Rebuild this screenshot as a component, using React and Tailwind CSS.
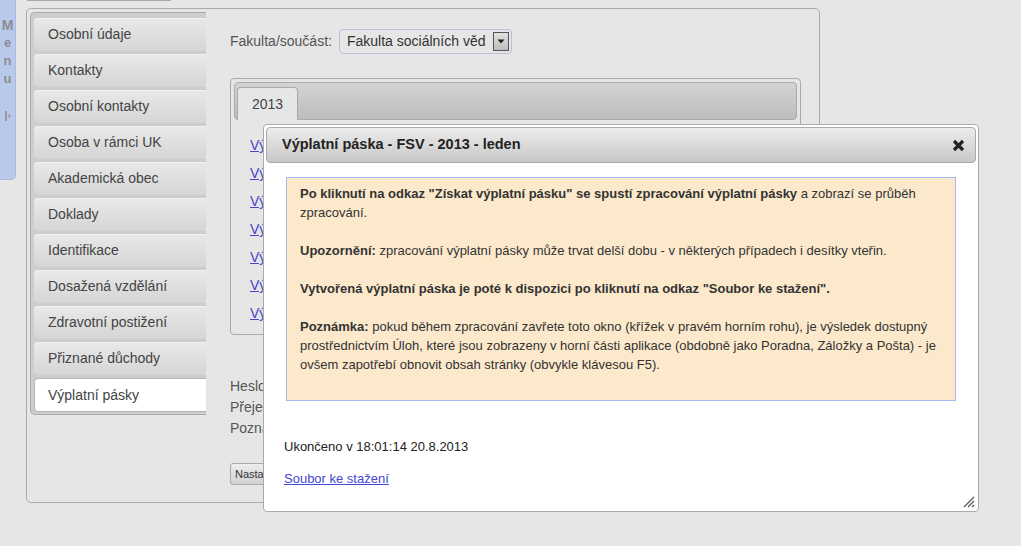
import React from "react";

const sideTabs = [
  "Osobní údaje",
  "Kontakty",
  "Osobní kontakty",
  "Osoba v rámci UK",
  "Akademická obec",
  "Doklady",
  "Identifikace",
  "Dosažená vzdělání",
  "Zdravotní postižení",
  "Přiznané důchody",
  "Výplatní pásky",
];

const months = ["leden", "únor", "březen", "duben", "květen", "červen", "červenec"];

function MenuStrip() {
  return (
    <div className="flex h-[180px] w-[16px] flex-col items-center rounded-br-[5px] border-r border-b border-[#a9bbe0] bg-[#b9c9ec] pt-[16px] text-[13px] font-bold leading-[18px] text-[#8c8c8c]">
      <span className="text-[14px]">M</span>
      <span>e</span>
      <span>n</span>
      <span>u</span>
      <svg className="mt-[22px]" width="8" height="12" viewBox="0 0 8 12">
        <rect x="1" y="1" width="2" height="10" fill="#9a9a9a" />
        <path d="M4.5 3.5 L7 6 L4.5 8.5 Z" fill="#9a9a9a" />
      </svg>
    </div>
  );
}

function SideTabs() {
  return (
    <div className="flex h-[403px] w-[176px] shrink-0 flex-col gap-[3px] rounded-l-[5px] border-y border-l border-[#aaa] bg-[#cdcdcd] pl-[3px] pt-[5px]">
      {sideTabs.map((label, i) => {
        const active = i === sideTabs.length - 1;
        return (
          <div
            key={label}
            className={
              active
                ? "flex h-[34px] items-center rounded-l-[4px] border-y border-l border-[#b4b4b4] bg-white pl-[13px] text-[14px] text-[#444]"
                : "flex h-[33px] items-center rounded-l-[4px] bg-gradient-to-b from-[#e9e9e9] to-[#d5d5d5] pl-[14px] text-[14px] text-[#444] shadow-[inset_0_1px_0_#f2f2f2]"
            }
          >
            {label}
          </div>
        );
      })}
    </div>
  );
}

function Content() {
  return (
    <div className="ml-[24px] mt-[17px] flex flex-col">
      <div className="flex items-center text-[14px] text-[#555]">
        <span className="mr-[7px]">Fakulta/součást:</span>
        <div className="flex h-[25px] w-[173px] items-center justify-between rounded-[4px] border border-[#b9c0d8] pl-[7px] pr-[2px] text-[#333]">
          <span>Fakulta sociálních věd</span>
          <div className="flex h-[19px] w-[16px] items-center justify-center border border-[#555] bg-gradient-to-b from-[#e2e2e2] to-[#bdbdbd]">
            <svg width="8" height="5" viewBox="0 0 8 5">
              <path d="M0.5 0.5 L7.5 0.5 L4 4.5 Z" fill="#222" />
            </svg>
          </div>
        </div>
      </div>

      <div className="mt-[24px] h-[257px] w-[571px] rounded-[4px] border border-[#aaa] p-[3px]">
        <div className="flex h-[38px] items-end rounded-[4px] border border-[#aaa] bg-gradient-to-b from-[#d3d3d3] to-[#bdbdbd] pl-[2px]">
          <div className="-mb-px flex h-[33px] items-center rounded-t-[4px] border-x border-t border-[#aaa] bg-[#e6e6e6] px-[14px] text-[14px] text-[#444]">
            2013
          </div>
        </div>
        <div className="flex flex-col pl-[16px] pt-[11px] text-[14px]">
          {months.map((m) => (
            <a key={m} className="leading-[28px] text-[#4646cc] underline">
              Výplatní páska - FSV - 2013 - {m}
            </a>
          ))}
        </div>
      </div>

      <div className="mt-[41px] flex flex-col text-[14px] leading-[21px] text-[#555]">
        <span>Heslo pro otevření výplatní pásky je Vaše rodné číslo.</span>
        <span>Přejete-li si heslo změnit, použijte tlačítko níže.</span>
        <span>Poznámka: změna hesla se projeví u nově stažených pásek.</span>
      </div>

      <div className="mt-[22px]">
        <button className="h-[22px] rounded-[3px] border border-[#aaa] bg-gradient-to-b from-[#eee] to-[#d2d2d2] px-[4px] text-[11px] text-[#333]">
          Nastavit heslo
        </button>
      </div>
    </div>
  );
}

function Dialog() {
  return (
    <div className="absolute left-[263px] top-[124px] h-[388px] w-[716px] rounded-[4px] border border-[#aaa] bg-white p-[2px] text-[#333]">
      <div className="flex h-[36px] items-center justify-between rounded-[4px] border border-[#aaa] bg-gradient-to-b from-[#ececec] to-[#c8c8c8] pl-[15px] pr-[10px]">
        <span className="text-[14.5px] font-bold text-[#222]">Výplatní páska - FSV - 2013 - leden</span>
        <svg width="13" height="13" viewBox="0 0 13 13">
          <path d="M2 2 L11 11 M11 2 L2 11" stroke="#222" strokeWidth="3.2" strokeLinecap="butt" />
        </svg>
      </div>

      <div className="mx-[20px] mt-[14px] h-[224px] border border-[#a7b9ee] bg-[#fce9cc] px-[13px] pt-[6px] text-[13px] leading-[19px] text-[#333]">
        <p className="mb-[19px]">
          <b>Po kliknutí na odkaz "Získat výplatní pásku" se spustí zpracování výplatní pásky</b> a zobrazí se průběh
          zpracování.
        </p>
        <p className="mb-[19px]">
          <b>Upozornění:</b> zpracování výplatní pásky může trvat delší dobu - v některých případech i desítky vteřin.
        </p>
        <p className="mb-[19px]">
          <b>Vytvořená výplatní páska je poté k dispozici po kliknutí na odkaz "Soubor ke stažení".</b>
        </p>
        <p>
          <b>Poznámka:</b> pokud během zpracování zavřete toto okno (křížek v pravém horním rohu), je výsledek dostupný
          prostřednictvím Úloh, které jsou zobrazeny v horní části aplikace (obdobně jako Poradna, Záložky a Pošta) - je
          ovšem zapotřebí obnovit obsah stránky (obvykle klávesou F5).
        </p>
      </div>

      <div className="ml-[18px] mt-[36px] text-[13px] leading-[19px] text-[#222]">Ukončeno v 18:01:14 20.8.2013</div>
      <div className="ml-[18px] mt-[13px] text-[13px] leading-[19px]">
        <a className="text-[#4646d6] underline">Soubor ke stažení</a>
      </div>

      <svg className="absolute bottom-[3px] right-[3px]" width="12" height="12" viewBox="0 0 12 12">
        <path d="M1 11 L11 1 M5 11 L11 5 M9 11 L11 9" stroke="#555" strokeWidth="1.2" />
      </svg>
    </div>
  );
}

export default function App() {
  return (
    <div className="relative h-[546px] w-[1021px] overflow-hidden bg-[#e6e6e6] font-['Liberation_Sans',Arial,sans-serif]">
      <div className="flex items-start">
        <MenuStrip />
        <div className="ml-[10px] flex flex-col">
          <div className="ml-px h-px w-[144px] bg-[#aaa]" />
          <div className="mt-[7px] flex h-[495px] w-[794px] rounded-[5px] border border-[#aaa] p-[3px]">
            <SideTabs />
            <Content />
          </div>
        </div>
      </div>
      <Dialog />
    </div>
  );
}
